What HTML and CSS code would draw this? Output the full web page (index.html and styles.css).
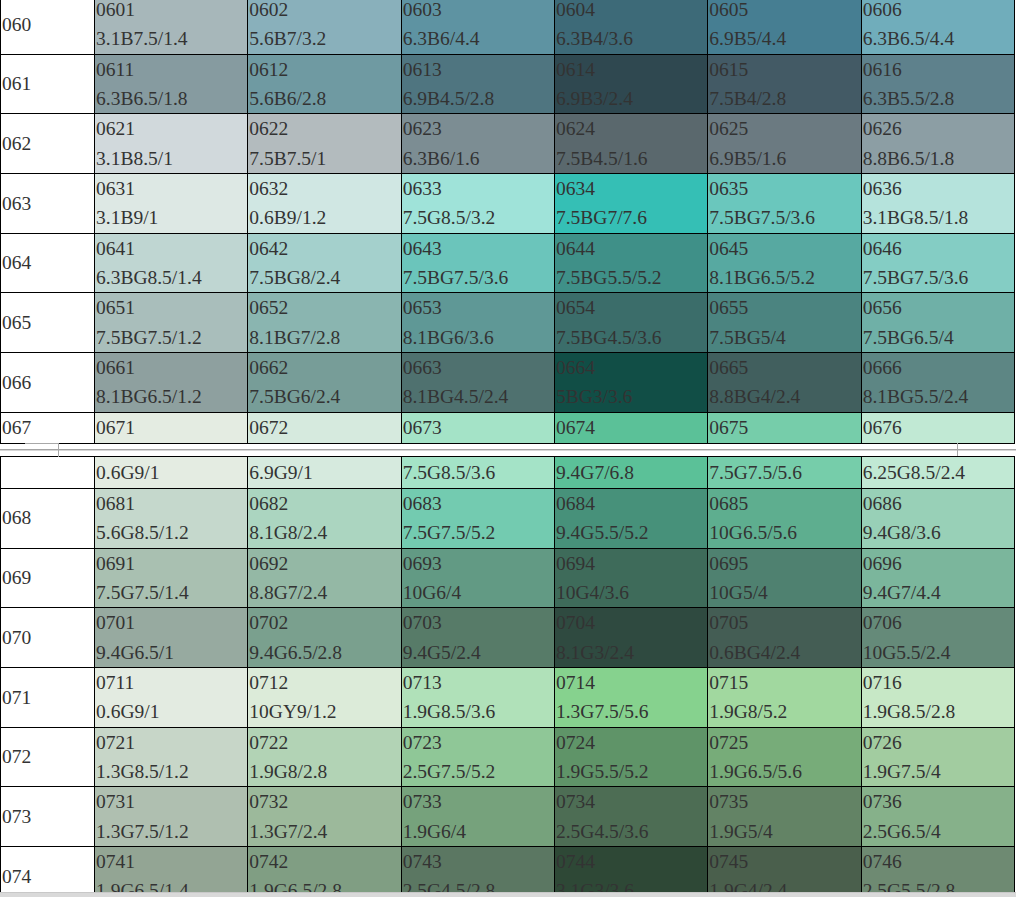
FILE: index.html
```html
<!DOCTYPE html>
<html lang="en">
  <head>
    <meta charset="UTF-8" />
    <meta name="viewport" content="width=device-width, initial-scale=1.0" />
    <title>Color chart 060 - 074</title>
    <link rel="stylesheet" href="styles.css">
  </head>
  <body>
    <div class="sheet">
      <!-- page 1 -->
      <table class="chart">
        <colgroup><col class="label-col"><col span="6"></colgroup>
        <tr>
          <td class="label">060</td>
          <td style="background:#a7b7ba">0601<br>3.1B7.5/1.4</td>
          <td style="background:#89b0bb">0602<br>5.6B7/3.2</td>
          <td style="background:#5e93a2">0603<br>6.3B6/4.4</td>
          <td style="background:#3d6a78">0604<br>6.3B4/3.6</td>
          <td style="background:#467e92">0605<br>6.9B5/4.4</td>
          <td style="background:#70adbb">0606<br>6.3B6.5/4.4</td>
        </tr>
        <tr>
          <td class="label">061</td>
          <td style="background:#869ba0">0611<br>6.3B6.5/1.8</td>
          <td style="background:#6f9aa2">0612<br>5.6B6/2.8</td>
          <td style="background:#4f7580">0613<br>6.9B4.5/2.8</td>
          <td style="background:#2f4850">0614<br>6.9B3/2.4</td>
          <td style="background:#435a65">0615<br>7.5B4/2.8</td>
          <td style="background:#5e818c">0616<br>6.3B5.5/2.8</td>
        </tr>
        <tr>
          <td class="label">062</td>
          <td style="background:#d1d9dc">0621<br>3.1B8.5/1</td>
          <td style="background:#b3bbbe">0622<br>7.5B7.5/1</td>
          <td style="background:#7c8d93">0623<br>6.3B6/1.6</td>
          <td style="background:#5a686d">0624<br>7.5B4.5/1.6</td>
          <td style="background:#6b7a81">0625<br>6.9B5/1.6</td>
          <td style="background:#8c9ea4">0626<br>8.8B6.5/1.8</td>
        </tr>
        <tr>
          <td class="label">063</td>
          <td style="background:#dde8e4">0631<br>3.1B9/1</td>
          <td style="background:#d0e7e3">0632<br>0.6B9/1.2</td>
          <td style="background:#9fe3d9">0633<br>7.5G8.5/3.2</td>
          <td style="background:#35bfb5">0634<br>7.5BG7/7.6</td>
          <td style="background:#6ac7bd">0635<br>7.5BG7.5/3.6</td>
          <td style="background:#b5e3dc">0636<br>3.1BG8.5/1.8</td>
        </tr>
        <tr>
          <td class="label">064</td>
          <td style="background:#bfd6d2">0641<br>6.3BG8.5/1.4</td>
          <td style="background:#a4d0cc">0642<br>7.5BG8/2.4</td>
          <td style="background:#6bc5bb">0643<br>7.5BG7.5/3.6</td>
          <td style="background:#3f9088">0644<br>7.5BG5.5/5.2</td>
          <td style="background:#57a9a1">0645<br>8.1BG6.5/5.2</td>
          <td style="background:#84cdc4">0646<br>7.5BG7.5/3.6</td>
        </tr>
        <tr>
          <td class="label">065</td>
          <td style="background:#a9bebb">0651<br>7.5BG7.5/1.2</td>
          <td style="background:#8ab5b0">0652<br>8.1BG7/2.8</td>
          <td style="background:#5f9896">0653<br>8.1BG6/3.6</td>
          <td style="background:#3b6d6a">0654<br>7.5BG4.5/3.6</td>
          <td style="background:#4b8480">0655<br>7.5BG5/4</td>
          <td style="background:#6fb0a7">0656<br>7.5BG6.5/4</td>
        </tr>
        <tr>
          <td class="label">066</td>
          <td style="background:#8ea09f">0661<br>8.1BG6.5/1.2</td>
          <td style="background:#779d98">0662<br>7.5BG6/2.4</td>
          <td style="background:#4f716f">0663<br>8.1BG4.5/2.4</td>
          <td style="background:#114e46">0664<br>5BG3/3.6</td>
          <td style="background:#415f5e">0665<br>8.8BG4/2.4</td>
          <td style="background:#5d8684">0666<br>8.1BG5.5/2.4</td>
        </tr>
        <tr class="split">
          <td class="label">067</td>
          <td style="background:#e4ece2">0671</td>
          <td style="background:#d6eade">0672</td>
          <td style="background:#a4e3c7">0673</td>
          <td style="background:#5bc198">0674</td>
          <td style="background:#76cdaa">0675</td>
          <td style="background:#c1e9d4">0676</td>
        </tr>
      </table>

      <!-- page gap -->
      <div class="page-break">
        <span class="corner corner-left"></span>
        <span class="corner corner-right"></span>
      </div>

      <!-- page 2 -->
      <table class="chart">
        <colgroup><col class="label-col"><col span="6"></colgroup>
        <tr class="split split-end">
          <td class="label"></td>
          <td style="background:#e4ece2">0.6G9/1</td>
          <td style="background:#d6eade">6.9G9/1</td>
          <td style="background:#a4e3c7">7.5G8.5/3.6</td>
          <td style="background:#5bc198">9.4G7/6.8</td>
          <td style="background:#76cdaa">7.5G7.5/5.6</td>
          <td style="background:#c1e9d4">6.25G8.5/2.4</td>
        </tr>
        <tr>
          <td class="label">068</td>
          <td style="background:#c5d8cc">0681<br>5.6G8.5/1.2</td>
          <td style="background:#abd5c0">0682<br>8.1G8/2.4</td>
          <td style="background:#73cbb0">0683<br>7.5G7.5/5.2</td>
          <td style="background:#47917a">0684<br>9.4G5.5/5.2</td>
          <td style="background:#5eae8f">0685<br>10G6.5/5.6</td>
          <td style="background:#98d0b7">0686<br>9.4G8/3.6</td>
        </tr>
        <tr>
          <td class="label">069</td>
          <td style="background:#a9c0b1">0691<br>7.5G7.5/1.4</td>
          <td style="background:#94b8a5">0692<br>8.8G7/2.4</td>
          <td style="background:#629a84">0693<br>10G6/4</td>
          <td style="background:#3e6b5a">0694<br>10G4/3.6</td>
          <td style="background:#4f8170">0695<br>10G5/4</td>
          <td style="background:#7bb69c">0696<br>9.4G7/4.4</td>
        </tr>
        <tr>
          <td class="label">070</td>
          <td style="background:#97aaa0">0701<br>9.4G6.5/1</td>
          <td style="background:#7aa08e">0702<br>9.4G6.5/2.8</td>
          <td style="background:#577b68">0703<br>9.4G5/2.4</td>
          <td style="background:#2f4a40">0704<br>8.1G3/2.4</td>
          <td style="background:#445d54">0705<br>0.6BG4/2.4</td>
          <td style="background:#658a79">0706<br>10G5.5/2.4</td>
        </tr>
        <tr>
          <td class="label">071</td>
          <td style="background:#e3ebe1">0711<br>0.6G9/1</td>
          <td style="background:#dcebd9">0712<br>10GY9/1.2</td>
          <td style="background:#b0e1b9">0713<br>1.9G8.5/3.6</td>
          <td style="background:#86d28e">0714<br>1.3G7.5/5.6</td>
          <td style="background:#a1d89f">0715<br>1.9G8/5.2</td>
          <td style="background:#c7e8c6">0716<br>1.9G8.5/2.8</td>
        </tr>
        <tr>
          <td class="label">072</td>
          <td style="background:#c7d6c8">0721<br>1.3G8.5/1.2</td>
          <td style="background:#b2d3b5">0722<br>1.9G8/2.8</td>
          <td style="background:#8fc797">0723<br>2.5G7.5/5.2</td>
          <td style="background:#5f9468">0724<br>1.9G5.5/5.2</td>
          <td style="background:#77ac79">0725<br>1.9G6.5/5.6</td>
          <td style="background:#a2cca0">0726<br>1.9G7.5/4</td>
        </tr>
        <tr>
          <td class="label">073</td>
          <td style="background:#afbfb0">0731<br>1.3G7.5/1.2</td>
          <td style="background:#9cb99b">0732<br>1.3G7/2.4</td>
          <td style="background:#76a27c">0733<br>1.9G6/4</td>
          <td style="background:#4d6d54">0734<br>2.5G4.5/3.6</td>
          <td style="background:#638365">0735<br>1.9G5/4</td>
          <td style="background:#86b18a">0736<br>2.5G6.5/4</td>
        </tr>
        <tr>
          <td class="label">074</td>
          <td style="background:#93a594">0741<br>1.9G6.5/1.4</td>
          <td style="background:#809e83">0742<br>1.9G6.5/2.8</td>
          <td style="background:#5b7762">0743<br>2.5G4.5/2.8</td>
          <td style="background:#2e4836">0744<br>3.1G3/3.6</td>
          <td style="background:#4a5f4c">0745<br>1.9G4/2.4</td>
          <td style="background:#6e8a72">0746<br>2.5G5.5/2.8</td>
        </tr>
      </table>
    </div>

    <div class="bottom-bar"></div>
  </body>
</html>
```

FILE: styles.css
```css
html,
body {
  margin: 0;
  height: 100%;
  overflow: hidden;
  background-color: #fff;
}

body {
  font-family: 'Liberation Serif', 'Times New Roman', serif;
  font-size: 19.5px;
  color: #333;
}

/* page is scrolled a few pixels down */
.sheet {
  margin-top: -6px;
}

/* 색상표 */
.chart {
  width: 1015px;
  table-layout: fixed;
  border-collapse: collapse;
}

.label-col {
  width: 94px;
}

.chart td {
  border: 1px solid #000;
  padding: 0 0 0 1px;
  line-height: 29.35px;
  vertical-align: top;
  white-space: nowrap;
  overflow: hidden;
}

.chart td.label {
  vertical-align: middle;
  color: #333;
}

.chart tr.split td {
  height: 30px;
  line-height: 30px;
}

.chart tr.split-end td {
  height: 31px;
  line-height: 31px;
}

/* 페이지 구분선 */
.page-break {
  position: relative;
  height: 12px;
}

.page-break::before {
  content: '';
  position: absolute;
  left: 0;
  right: 0;
  top: 5px;
  height: 1px;
  background-color: #a4a4a4;
  box-shadow: 0 1px 0 #d6d6d6;
}

.corner {
  position: absolute;
  top: -1px;
  height: 13px;
}

.corner-left {
  left: 25px;
  width: 33px;
  border-top: 1px solid #a8a8a8;
  border-right: 1px solid #a8a8a8;
}

.corner-right {
  left: 957px;
  width: 0;
  border-left: 1px solid #a8a8a8;
}

.bottom-bar {
  position: fixed;
  left: 0;
  right: 0;
  bottom: 0;
  height: 4px;
  background-color: #d9d9d9;
  border-top: 1px solid #c8c8c8;
}
```
